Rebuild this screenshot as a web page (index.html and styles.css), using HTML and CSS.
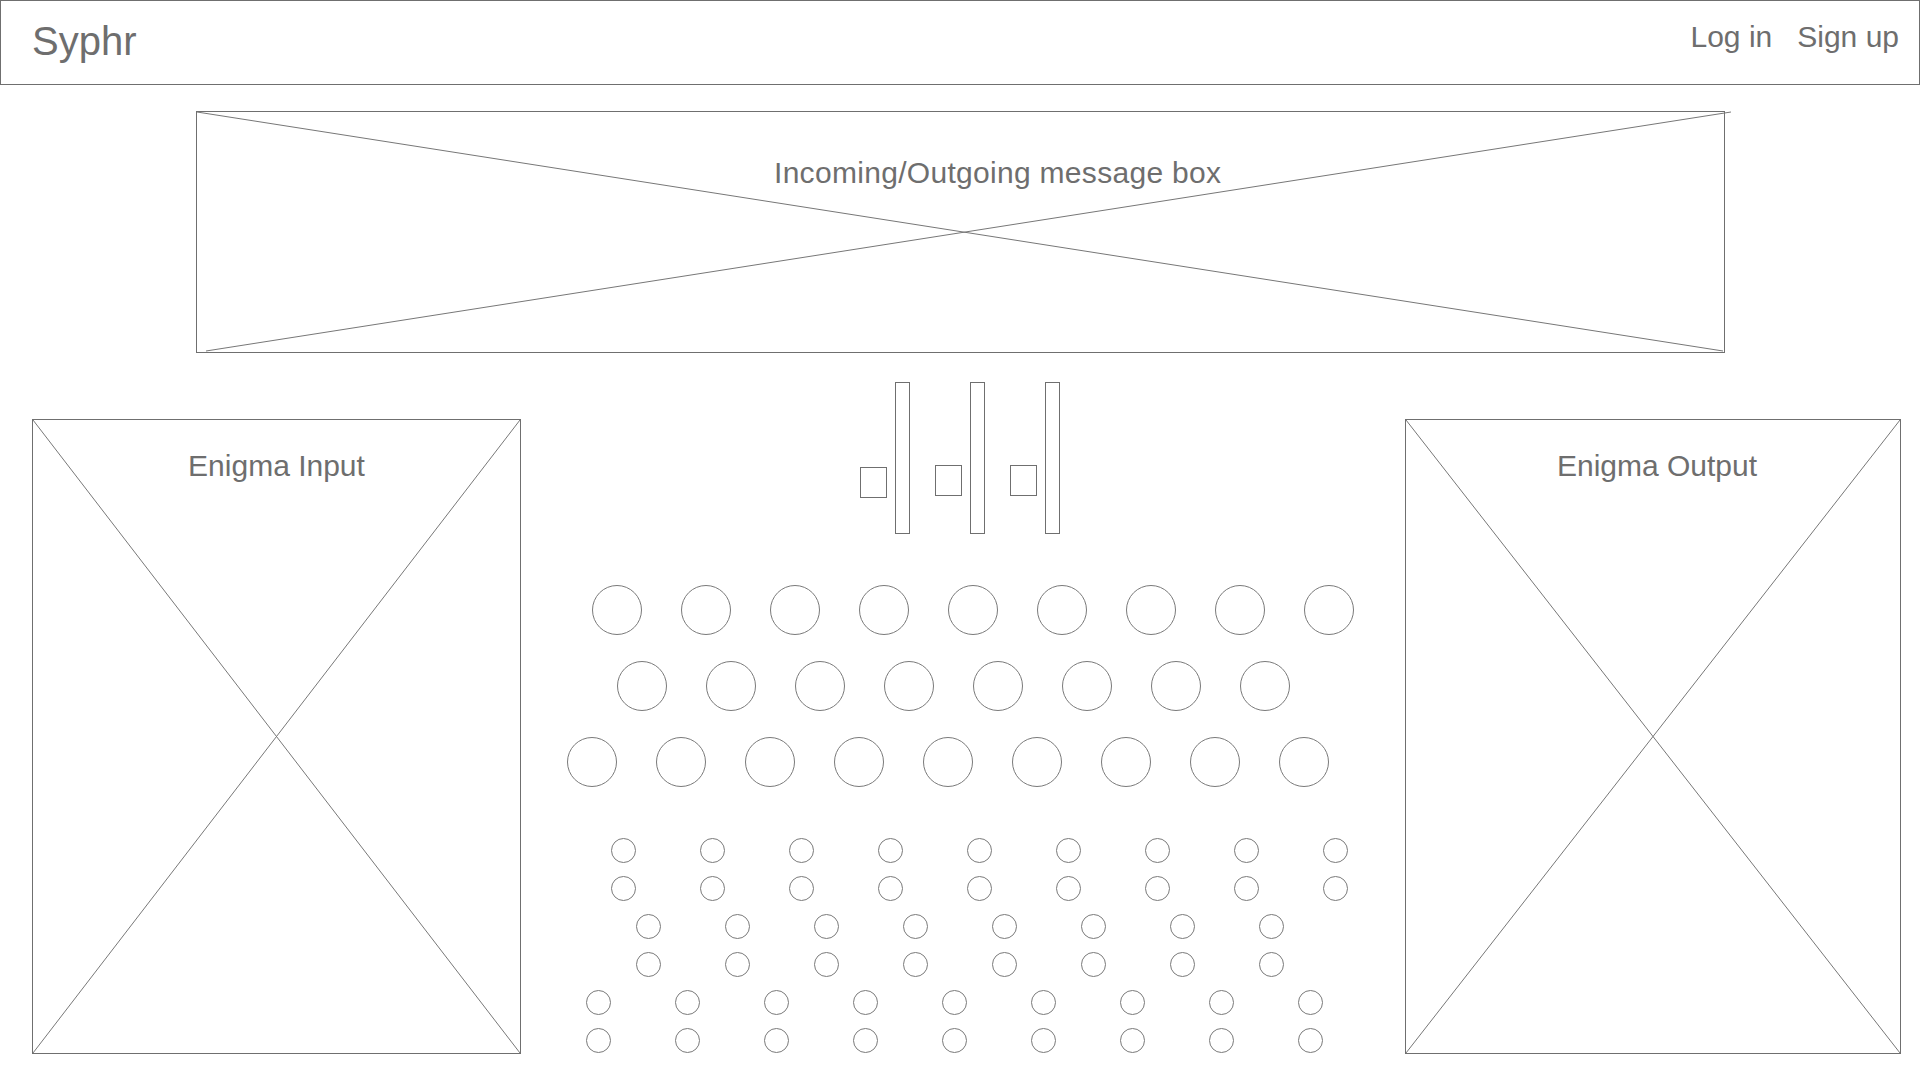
FILE: index.html
```html
<!DOCTYPE html>
<html lang="en">
<head>
    <meta charset="UTF-8">
    <meta name="viewport" content="width=device-width, initial-scale=1.0">
    <title>Syphr</title>
    <link rel="stylesheet" href="styles.css">
</head>
<body>
    <header class="topbar">
        <div class="brand">Syphr</div>
        <nav class="auth"><span>Log in</span><span>Sign up</span></nav>
    </header>

    <section class="message placeholder">
        <svg class="cross" viewBox="0 0 1529 242" preserveAspectRatio="none">
            <line x1="0" y1="0" x2="1528" y2="241"></line>
            <line x1="9" y1="241" x2="1536" y2="0"></line>
        </svg>
        <div class="message-label">Incoming/Outgoing message box</div>
    </section>

    <main class="workspace">
        <section class="panel panel-input placeholder">
            <svg class="cross" viewBox="0 0 100 100" preserveAspectRatio="none">
                <line x1="0" y1="0" x2="100" y2="100"></line>
                <line x1="0" y1="100" x2="100" y2="0"></line>
            </svg>
            <div class="panel-label">Enigma Input</div>
        </section>

        <section class="machine">
            <div class="rotors">
                <div class="rotor"><div class="rotor-window first"></div><div class="rotor-wheel"></div></div>
                <div class="rotor"><div class="rotor-window"></div><div class="rotor-wheel"></div></div>
                <div class="rotor"><div class="rotor-window"></div><div class="rotor-wheel"></div></div>
            </div>

            <div class="keys keys-1">
                <div class="key"></div><div class="key"></div><div class="key"></div><div class="key"></div><div class="key"></div><div class="key"></div><div class="key"></div><div class="key"></div><div class="key"></div>
            </div>
            <div class="keys keys-2">
                <div class="key"></div><div class="key"></div><div class="key"></div><div class="key"></div><div class="key"></div><div class="key"></div><div class="key"></div><div class="key"></div>
            </div>
            <div class="keys keys-3">
                <div class="key"></div><div class="key"></div><div class="key"></div><div class="key"></div><div class="key"></div><div class="key"></div><div class="key"></div><div class="key"></div><div class="key"></div>
            </div>

            <div class="plugs plugs-1">
                <div class="plug"><i></i><i></i></div><div class="plug"><i></i><i></i></div><div class="plug"><i></i><i></i></div><div class="plug"><i></i><i></i></div><div class="plug"><i></i><i></i></div><div class="plug"><i></i><i></i></div><div class="plug"><i></i><i></i></div><div class="plug"><i></i><i></i></div><div class="plug"><i></i><i></i></div>
            </div>
            <div class="plugs plugs-2">
                <div class="plug"><i></i><i></i></div><div class="plug"><i></i><i></i></div><div class="plug"><i></i><i></i></div><div class="plug"><i></i><i></i></div><div class="plug"><i></i><i></i></div><div class="plug"><i></i><i></i></div><div class="plug"><i></i><i></i></div><div class="plug"><i></i><i></i></div>
            </div>
            <div class="plugs plugs-3">
                <div class="plug"><i></i><i></i></div><div class="plug"><i></i><i></i></div><div class="plug"><i></i><i></i></div><div class="plug"><i></i><i></i></div><div class="plug"><i></i><i></i></div><div class="plug"><i></i><i></i></div><div class="plug"><i></i><i></i></div><div class="plug"><i></i><i></i></div><div class="plug"><i></i><i></i></div>
            </div>
        </section>

        <section class="panel panel-output placeholder">
            <svg class="cross" viewBox="0 0 100 100" preserveAspectRatio="none">
                <line x1="0" y1="0" x2="100" y2="100"></line>
                <line x1="0" y1="100" x2="100" y2="0"></line>
            </svg>
            <div class="panel-label">Enigma Output</div>
        </section>
    </main>
</body>
</html>
```

FILE: styles.css
```css
body { margin: 0; font-family: "Liberation Sans", Arial, sans-serif; color: #6e6e6e; background: #fff; }

.topbar { display: flex; justify-content: space-between; align-items: flex-start; height: 85px; box-sizing: border-box; border: 1px solid #6f6f6f; padding: 20px 20px 0 31px; }
.brand { font-size: 40px; line-height: 1; }
.auth { display: flex; gap: 25px; font-size: 30px; line-height: 1; margin-top: 1px; }

.placeholder { position: relative; box-sizing: border-box; border: 1px solid #6f6f6f; }
.cross { position: absolute; top: 0; left: 0; width: 100%; height: 100%; overflow: visible; }
.cross line { stroke: #777; stroke-width: 1; vector-effect: non-scaling-stroke; }

.message { width: 1529px; height: 242px; margin: 26px 0 0 196px; }
.message-label { position: relative; font-size: 30px; line-height: 1; letter-spacing: 0.3px; margin: 46px 0 0 577px; }

.workspace { display: flex; align-items: flex-start; margin-top: 29px; }
.panel { margin-top: 37px; height: 635px; }
.panel-input { width: 489px; margin-left: 32px; }
.panel-output { width: 496px; margin-right: 19px; }
.panel-label { position: relative; font-size: 30px; line-height: 1; text-align: center; margin-top: 31px; }
.panel-output .panel-label { padding-left: 8px; }

.machine { flex: 1; display: flex; flex-direction: column; align-items: flex-start; }

.rotors { display: flex; gap: 25px; margin-left: 339px; }
.rotor { display: flex; gap: 8px; align-items: flex-start; }
.rotor-window { width: 27px; height: 31px; margin-top: 83px; box-sizing: border-box; border: 1px solid #6f6f6f; }
.rotor-window.first { margin-top: 85px; }
.rotor-wheel { width: 15px; height: 152px; box-sizing: border-box; border: 1px solid #6f6f6f; }

.keys { display: flex; gap: 39px; margin-top: 26px; }
.keys-1 { margin-top: 51px; margin-left: 71px; }
.keys-2 { margin-left: 96px; }
.keys-3 { margin-left: 46px; }
.key { width: 50px; height: 50px; box-sizing: border-box; border: 1px solid #7a7a7a; border-radius: 50%; }

.plugs { display: flex; gap: 64px; margin-top: 13px; }
.plugs-1 { margin-top: 51px; margin-left: 90px; }
.plugs-2 { margin-left: 115px; }
.plugs-3 { margin-left: 65px; }
.plug { display: flex; flex-direction: column; gap: 13px; }
.plug i { display: block; width: 25px; height: 25px; box-sizing: border-box; border: 1px solid #7a7a7a; border-radius: 50%; }
```
